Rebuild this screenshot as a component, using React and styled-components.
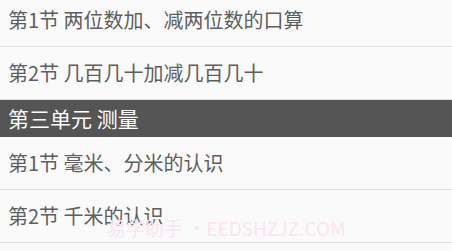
import React from 'react'
import styled, { createGlobalStyle } from 'styled-components'

const GlobalStyle = createGlobalStyle`
  html, body {
    margin: 0;
    padding: 0;
    background: #fafafa;
    overflow: hidden;
  }
  body {
    font-family: "Noto Sans CJK SC", "Noto Sans", sans-serif;
  }
`

const Screen = styled.div`
  position: relative;
  width: 452px;
  height: 251px;
  overflow: hidden;
  background: #fafafa;
`

const List = styled.div`
  display: flex;
  flex-direction: column;
  margin-top: -6px;
`

const Row = styled.div`
  display: flex;
  align-items: center;
  height: 52px;
  padding-left: 8px;
  border-bottom: 1px solid #e0e0e0;
  background: #fafafa;
  color: #5e5e5e;
  font-size: 20px;
  line-height: 1;
  white-space: nowrap;
`

const Header = styled.div`
  display: flex;
  align-items: center;
  height: 37px;
  padding-left: 8px;
  background: #555555;
  color: #ffffff;
  font-size: 21px;
  line-height: 1;
  white-space: nowrap;
`

const Watermark = styled.div`
  position: absolute;
  left: 107px;
  top: 218px;
  color: #fae4f1;
  font-size: 19px;
  line-height: 1;
  white-space: nowrap;
  pointer-events: none;
`

const units = [
  { type: 'row', text: '第1节 两位数加、减两位数的口算' },
  { type: 'row', text: '第2节 几百几十加减几百几十' },
  { type: 'header', text: '第三单元 测量' },
  { type: 'row', text: '第1节 毫米、分米的认识' },
  { type: 'row', text: '第2节 千米的认识' },
]

export default function App() {
  return (
    <>
      <GlobalStyle />
      <Screen>
        <List>
          {units.map((u, i) =>
            u.type === 'header'
              ? <Header key={i}>{u.text}</Header>
              : <Row key={i}>{u.text}</Row>
          )}
        </List>
        <Watermark>易学助手 •EEDSHZJZ.COM</Watermark>
      </Screen>
    </>
  )
}
